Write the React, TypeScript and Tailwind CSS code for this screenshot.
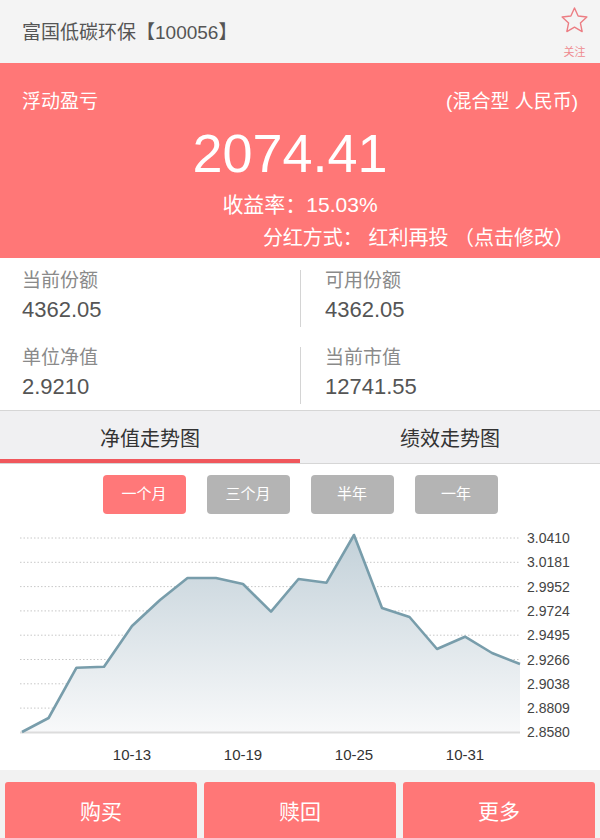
import React from "react";

const pts: [number, number][] = [
  [22, 218], [48.6, 204], [76.5, 153.7], [104, 152.7], [132, 112], [160, 86],
  [187.5, 64], [216, 64], [243, 70], [271, 97.7], [298.5, 65], [326.5, 68.7],
  [354, 21], [382, 94], [409.5, 103], [437, 135], [465, 122.7], [492, 139], [520, 150],
];
const yLabels = ["3.0410", "3.0181", "2.9952", "2.9724", "2.9495", "2.9266", "2.9038", "2.8809", "2.8580"];
const xLabels: [string, number][] = [["10-13", 132], ["10-19", 243], ["10-25", 354], ["10-31", 465]];

function Chart() {
  const line = pts.map((p) => p.join(",")).join(" ");
  const area = `22,218.4 ${line} 520,218.4`;
  return (
    <svg width="600" height="256" viewBox="0 0 600 256" className="block">
      <defs>
        <linearGradient id="fillg" x1="0" y1="0" x2="0" y2="1">
          <stop offset="0%" stopColor="#c3d1d9" />
          <stop offset="100%" stopColor="#f8f9fa" />
        </linearGradient>
      </defs>
      {yLabels.map((l, i) => {
        const y = 24 + i * 24.3;
        return (
          <g key={l}>
            {i < 8 ? (
              <line x1="20" x2="520" y1={y} y2={y} stroke="#c8c8c8" strokeWidth="1" strokeDasharray="1.5 2" />
            ) : null}
            <text x="527" y={y + 5} fontSize="14" fill="#444" fontFamily="Liberation Sans, sans-serif">
              {l}
            </text>
          </g>
        );
      })}
      <polygon points={area} fill="url(#fillg)" />
      <line x1="20" x2="520" y1="218.4" y2="218.4" stroke="#dcdcdc" strokeWidth="2" />
      <polyline points={line} fill="none" stroke="#789dab" strokeWidth="2.6" strokeLinejoin="round" />
      {xLabels.map(([l, x]) => (
        <text key={l} x={x} y="246" fontSize="15" fill="#333" textAnchor="middle" fontFamily="Liberation Sans, sans-serif">
          {l}
        </text>
      ))}
    </svg>
  );
}

function Star() {
  const cx = 13.5, cy = 14, R = 13, r = 6.2;
  const p: string[] = [];
  for (let i = 0; i < 10; i++) {
    const a = -Math.PI / 2 + (i * Math.PI) / 5;
    const rr = i % 2 === 0 ? R : r;
    p.push(`${(cx + rr * Math.cos(a)).toFixed(2)},${(cy + rr * Math.sin(a)).toFixed(2)}`);
  }
  return (
    <svg width="27" height="27" viewBox="0 0 27 27">
      <polygon points={p.join(" ")} fill="none" stroke="#ec7d83" strokeWidth="1.4" strokeLinejoin="round" />
    </svg>
  );
}

export default function App() {
  return (
    <div className="w-[600px] h-[838px] overflow-hidden bg-white font-['Liberation_Sans','Noto_Sans_CJK_SC',sans-serif]">
      {/* Header */}
      <div className="h-[63px] bg-[#f4f4f4] flex justify-between pl-[22px] pr-[12px]">
        <div className="self-center pt-[3px] text-[19px] leading-[24px] text-[#555]">富国低碳环保【100056】</div>
        <div className="flex flex-col items-center pt-[7px]">
          <Star />
          <div className="mt-[11px] text-[11px] leading-[14px] text-[#ef8a8f]">关注</div>
        </div>
      </div>

      {/* Red panel */}
      <div className="h-[195px] bg-[#ff7777] text-white flex flex-col">
        <div className="flex justify-between px-[22px] pt-[27px] text-[19px] leading-[24px]">
          <span>浮动盈亏</span>
          <span>(混合型 人民币)</span>
        </div>
        <div className="mt-[12px] text-center pr-[20px] text-[54px] leading-[54px]">2074.41</div>
        <div className="mt-[13px] text-center text-[21px] leading-[24px]">收益率：15.03%</div>
        <div className="mt-[9px] text-right pr-[26px] text-[20px] leading-[24px]">分红方式： 红利再投 （点击修改）</div>
      </div>

      {/* Info */}
      <div className="h-[152px] pt-[12px] flex flex-col gap-[20px]">
        {[
          [["当前份额", "4362.05"], ["可用份额", "4362.05"]],
          [["单位净值", "2.9210"], ["当前市值", "12741.55"]],
        ].map((row, ri) => (
          <div key={ri} className="grid grid-cols-2">
            {row.map(([label, value], ci) => (
              <div key={label} className={ci === 0 ? "pl-[22px] pb-[4px]" : "pl-[24px] pb-[4px] border-l border-[#d4d4d4]"}>
                <div className="text-[19px] leading-[22px] text-[#8a8a8a]">{label}</div>
                <div className="mt-[5px] text-[22px] leading-[26px] text-[#555]">{value}</div>
              </div>
            ))}
          </div>
        ))}
      </div>

      {/* Tabs */}
      <div className="border-t border-b border-[#d6d6d6] bg-[#f0f0f2] flex">
        <div className="flex-1 flex flex-col">
          <div className="h-[48px] pt-[8px] flex items-center justify-center text-[20px] text-[#333]">净值走势图</div>
          <div className="h-[4px] bg-[#f0575c]" />
        </div>
        <div className="flex-1 flex flex-col">
          <div className="h-[48px] pt-[8px] flex items-center justify-center text-[20px] text-[#333]">绩效走势图</div>
          <div className="h-[4px]" />
        </div>
      </div>

      {/* Period buttons */}
      <div className="pt-[11px] flex justify-center gap-[21px]">
        {["一个月", "三个月", "半年", "一年"].map((t, i) => (
          <div
            key={t}
            className={
              i === 0
                ? "w-[83px] h-[39px] rounded-[4px] bg-[#ff7879] text-white text-[15px] flex items-center justify-center"
                : "w-[83px] h-[39px] rounded-[4px] bg-[#b4b4b4] text-white text-[15px] flex items-center justify-center"
            }
          >
            {t}
          </div>
        ))}
      </div>

      <Chart />

      {/* Bottom actions */}
      <div className="h-[68px] bg-[#f2f2f2] pt-[12px] px-[5px] flex gap-[7px]">
        {["购买", "赎回", "更多"].map((t) => (
          <div key={t} className="flex-1 h-[56px] rounded-t-[3px] bg-[#ff7777] text-white text-[21px] flex items-center justify-center pt-[4px]">
            {t}
          </div>
        ))}
      </div>
    </div>
  );
}
